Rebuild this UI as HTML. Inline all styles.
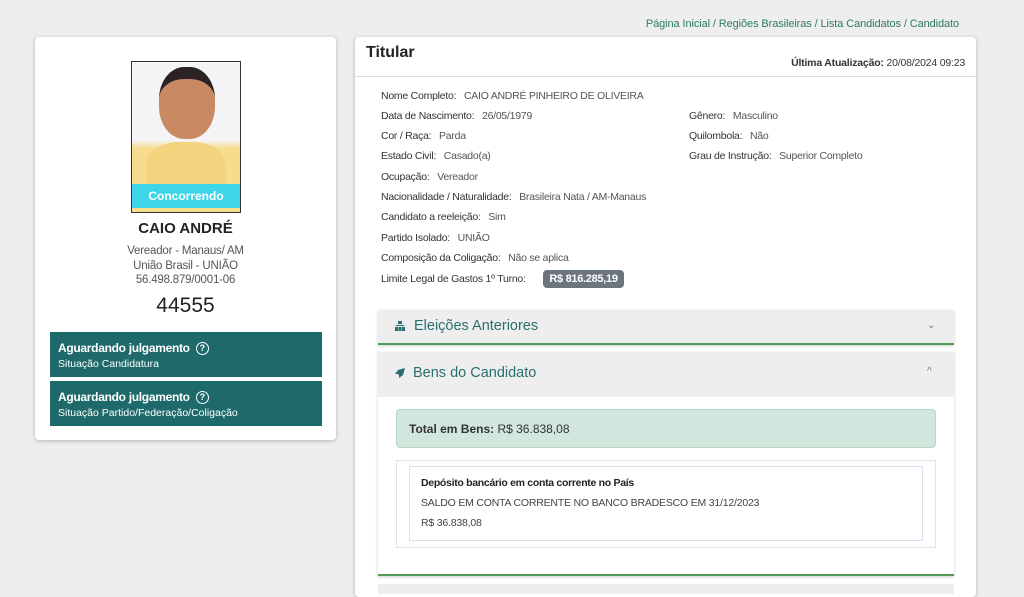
<!DOCTYPE html><html><head><meta charset="utf-8"><style>
*{box-sizing:border-box;margin:0;padding:0}
body{width:1024px;height:589px;overflow:hidden;background:#eeeeee;font-family:"Liberation Sans",sans-serif;position:relative;color:#333}
.a{position:absolute}
.card{background:#fff;border-radius:4px;box-shadow:0 1px 4px rgba(0,0,0,.25)}
.row{position:absolute;font-size:10.5px;color:#555;white-space:nowrap;letter-spacing:-.25px}
.row b{font-weight:normal;color:#333;margin-right:5px}
.tb{position:absolute;left:50px;width:272px;height:45px;background:#1e6a6a;color:#fff;padding:9px 8px}
.tb .t{font-weight:bold;font-size:12px;letter-spacing:-.3px}
.tb .s{font-size:10.5px;margin-top:3px}
.q{display:inline-block;width:13px;height:13px;border:1.5px solid #fff;border-radius:50%;font-size:9px;text-align:center;line-height:10px;vertical-align:1px;margin-left:3px}
</style></head><body>
<div class="a" style="right:65px;top:18px;font-size:11px;color:#2d7a68;letter-spacing:-.1px">Página Inicial / Regiões Brasileiras / Lista Candidatos / Candidato</div>
<div class="a card" style="left:35px;top:37px;width:301px;height:403px"></div>
<div class="a" style="left:131px;top:61px;width:110px;height:152px;border:1px solid #333;background:linear-gradient(#f4f4f6 0%,#f4f4f6 52%,#f6dc8c 58%,#f6dc8c 100%);overflow:hidden">
<div class="a" style="left:14px;top:80px;width:80px;height:60px;border-radius:40% 40% 0 0;background:#f3d47e"></div>
<div class="a" style="left:27px;top:5px;width:56px;height:72px;border-radius:45%;background:#c98a63;border-top:12px solid #2b2323"></div>
<div class="a" style="left:0;top:122px;width:108px;height:24px;background:#3dd5e8;color:#fff;font-weight:bold;font-size:12px;text-align:center;line-height:24px">Concorrendo</div></div>
<div class="a" style="left:35px;width:301px;top:220px;text-align:center;font-weight:bold;font-size:15px;color:#222">CAIO ANDRÉ</div>
<div class="a" style="left:35px;width:301px;top:244px;text-align:center;font-size:11.5px;color:#555;line-height:14.5px;letter-spacing:-.2px">Vereador - Manaus/ AM<br>União Brasil - UNIÃO<br>56.498.879/0001-06</div>
<div class="a" style="left:35px;width:301px;top:294px;text-align:center;font-size:21px;color:#222">44555</div>
<div class="tb" style="top:332px"><div class="t">Aguardando julgamento <span class="q">?</span></div><div class="s">Situação Candidatura</div></div>
<div class="tb" style="top:381px"><div class="t">Aguardando julgamento <span class="q">?</span></div><div class="s">Situação Partido/Federação/Coligação</div></div>

<div class="a card" style="left:355px;top:37px;width:621px;height:560px"></div>
<div class="a" style="left:355px;top:76px;width:621px;border-top:1px solid #ddd"></div>
<div class="a" style="left:366px;top:44px;font-size:16px;font-weight:bold;color:#222">Titular</div>
<div class="a" style="right:59px;top:57px;font-size:10.5px;color:#333;letter-spacing:-.2px"><b>Última Atualização:</b> 20/08/2024 09:23</div>
<div class="row" style="left:381px;top:90px"><b>Nome Completo:</b> CAIO ANDRÉ PINHEIRO DE OLIVEIRA</div>
<div class="row" style="left:381px;top:110px"><b>Data de Nascimento:</b> 26/05/1979</div>
<div class="row" style="left:689px;top:110px"><b>Gênero:</b> Masculino</div>
<div class="row" style="left:381px;top:130px"><b>Cor / Raça:</b> Parda</div>
<div class="row" style="left:689px;top:130px"><b>Quilombola:</b> Não</div>
<div class="row" style="left:381px;top:150px"><b>Estado Civil:</b> Casado(a)</div>
<div class="row" style="left:689px;top:150px"><b>Grau de Instrução:</b> Superior Completo</div>
<div class="row" style="left:381px;top:171px"><b>Ocupação:</b> Vereador</div>
<div class="row" style="left:381px;top:191px"><b>Nacionalidade / Naturalidade:</b> Brasileira Nata / AM-Manaus</div>
<div class="row" style="left:381px;top:211px"><b>Candidato a reeleição:</b> Sim</div>
<div class="row" style="left:381px;top:232px"><b>Partido Isolado:</b> UNIÃO</div>
<div class="row" style="left:381px;top:252px"><b>Composição da Coligação:</b> Não se aplica</div>
<div class="row" style="left:381px;top:273px"><b>Limite Legal de Gastos 1º Turno:</b></div>
<div class="a" style="left:543px;top:270px;width:81px;height:18px;background:#6c757d;color:#fff;border-radius:4px;font-weight:bold;font-size:11px;text-align:center;line-height:18px;letter-spacing:-.3px">R$ 816.285,19</div>

<div class="a" style="left:378px;top:310px;width:576px;height:35px;background:#eeeeee;border-bottom:2px solid #4f9a56;box-shadow:0 1px 3px rgba(0,0,0,.2)"></div>
<svg class="a" style="left:394px;top:320px" width="12" height="12" viewBox="0 0 12 12" fill="#2a6f6f"><rect x="4" y="1" width="4" height="3"/><rect x="1" y="7" width="3" height="4"/><rect x="4.5" y="7" width="3" height="4"/><rect x="8" y="7" width="3" height="4"/><rect x="2" y="5" width="8" height="1"/></svg>
<div class="a" style="left:414px;top:318px;font-size:14.5px;color:#2a6f6f">Eleições Anteriores</div>
<div class="a" style="left:927px;top:320px;font-size:10px;color:#777">⌄</div>

<div class="a" style="left:378px;top:352px;width:576px;height:224px;background:#fff;border-bottom:2px solid #4f9a56;box-shadow:0 1px 3px rgba(0,0,0,.2)"></div>
<div class="a" style="left:378px;top:352px;width:576px;height:45px;background:#eeeeee"></div>
<svg class="a" style="left:394px;top:367px" width="12" height="12" viewBox="0 0 12 12" fill="#2a6f6f"><path d="M11 1 L4 3 L1 7 L4 7 L5 8 L5 11 L9 8 Z"/></svg>
<div class="a" style="left:413px;top:365px;font-size:14.5px;color:#2a6f6f">Bens do Candidato</div>
<div class="a" style="left:927px;top:366px;font-size:10px;color:#777">^</div>
<div class="a" style="left:396px;top:409px;width:540px;height:39px;background:#d1e7dd;border:1px solid #b3d8c5;border-radius:4px;font-size:12px;padding:12px 12px;color:#333"><b>Total em Bens:</b> R$ 36.838,08</div>
<div class="a" style="left:396px;top:460px;width:540px;height:88px;border:1px solid #e2e2e2"></div>
<div class="a" style="left:409px;top:466px;width:514px;height:75px;border:1px solid #dde;padding:10px 11px;font-size:10.5px;color:#444;letter-spacing:-.2px">
<div style="font-weight:bold;color:#222;letter-spacing:-.3px">Depósito bancário em conta corrente no País</div>
<div style="margin-top:8px">SALDO EM CONTA CORRENTE NO BANCO BRADESCO EM 31/12/2023</div>
<div style="margin-top:8px">R$ 36.838,08</div></div>
<div class="a" style="left:378px;top:584px;width:576px;height:10px;background:#eee"></div>
</body></html>
